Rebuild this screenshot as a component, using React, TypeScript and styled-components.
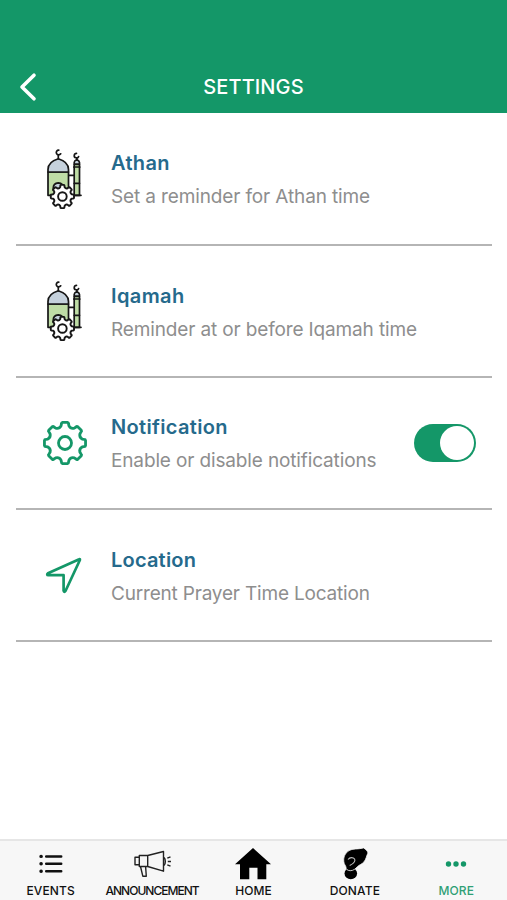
import React from 'react';
import styled, { createGlobalStyle } from 'styled-components';

const GREEN = '#149768';

const GlobalStyle = createGlobalStyle`
  * { box-sizing: border-box; }
  body { margin: 0; background: #fff; font-family: Inter, "Liberation Sans", sans-serif; }
`;

const Screen = styled.div`
  display: flex;
  flex-direction: column;
  width: 507px;
  height: 900px;
  overflow: hidden;
  background: #fff;
`;

const Header = styled.header`
  display: grid;
  grid-template-columns: 60px 1fr 60px;
  align-items: center;
  flex: none;
  height: 113px;
  padding-top: 60px;
  background: ${GREEN};
  color: #fff;
`;

const BackButton = styled.button`
  display: flex;
  width: 60px;
  height: 53px;
  padding: 12px 0 0 18px;
  border: 0;
  background: none;
  color: inherit;
`;

const HeaderTitle = styled.h1`
  margin: 0;
  text-align: center;
  font-size: 20px;
  font-weight: 500;
  line-height: 24px;
  letter-spacing: 0.1px;
`;

const List = styled.main`
  flex: 1;
  padding: 1px 15px 0 16px;
`;

const Row = styled.section`
  display: grid;
  grid-template-columns: 95px 1fr 62px;
  height: 132px;
  padding-right: 16px;
  border-bottom: 2px solid #b5b5b5;
`;

const IconCell = styled.div`
  display: flex;
  justify-content: center;
  align-items: center;
  height: 130px;
  padding-left: 2px;
`;

const MosqueCell = styled(IconCell)`
  height: 132px;
  padding-left: 3px;
`;

const Copy = styled.div<{ $top: number }>`
  padding-top: ${p => p.$top}px;
  white-space: nowrap;
`;

const Title = styled.h2<{ $track: number }>`
  margin: 0;
  color: #256a8c;
  font-size: 20px;
  font-weight: 600;
  line-height: 24px;
  letter-spacing: ${p => p.$track}px;
`;

const Subtitle = styled.p<{ $track: number }>`
  margin: 9px 0 0;
  color: #8e8e8e;
  font-size: 19px;
  line-height: 25px;
  letter-spacing: ${p => p.$track}px;
`;

const Switch = styled.button`
  display: flex;
  justify-content: flex-end;
  align-items: center;
  align-self: center;
  width: 62px;
  height: 38px;
  padding: 0 2px;
  border: 0;
  border-radius: 19px;
  background: ${GREEN};
`;

const Knob = styled.span`
  width: 34px;
  height: 34px;
  border-radius: 50%;
  background: #fff;
`;

const TabBar = styled.nav`
  display: grid;
  grid-template-columns: repeat(5, 1fr);
  flex: none;
  height: 61px;
  border-top: 2px solid #e6e6e6;
  background: #f7f7f7;
`;

const Tab = styled.a<{ $active?: boolean }>`
  display: flex;
  flex-direction: column;
  align-items: center;
  min-width: 0;
  color: ${p => (p.$active ? '#2f9f75' : '#111')};
`;

const TabIcon = styled.span`
  display: flex;
  align-items: center;
  justify-content: center;
  height: 43px;
  padding-top: 2px;
`;

const TabLabel = styled.span<{ $track: number }>`
  font-size: 12px;
  font-weight: 500;
  line-height: 14px;
  white-space: nowrap;
  letter-spacing: ${p => p.$track}px;
`;

function gearPath(cx: number, cy: number, tip: number, root: number, teeth = 8) {
  const point = (r: number, deg: number) => {
    const a = (deg * Math.PI) / 180;
    return `${(cx + r * Math.sin(a)).toFixed(2)} ${(cy - r * Math.cos(a)).toFixed(2)}`;
  };
  const step = 360 / teeth;
  let d = '';
  for (let i = 0; i < teeth; i++) {
    const c = i * step;
    d += `${i ? 'L' : 'M'}${point(tip * 0.94, c - 10.5)}`;
    d += `Q${point(tip, c - 10)} ${point(tip, c - 7)}L${point(tip, c + 7)}`;
    d += `Q${point(tip, c + 10)} ${point(tip * 0.94, c + 10.5)}`;
    d += `L${point(root * 1.1, c + 13)}`;
    d += `Q${point(root * 0.94, c + step / 2)} ${point(root * 1.1, c + step - 13)}`;
  }
  return d + 'Z';
}

const MosqueIcon = () => (
  <svg width="40" height="64" viewBox="0 0 40 64" fill="none" stroke="#161616" strokeWidth="1.7" strokeLinejoin="round" strokeLinecap="round">
    <path d="M3 24h20.5v23.3H3z" fill="#bfdda6" />
    <path d="M3 24v-2.5C3 16 7.5 12.5 13.3 10.8 19 12.5 23.5 16 23.5 21.5V24z" fill="#c5d1dc" />
    <path d="M13.3 10.8V7" />
    <path d="M13.8 2.1a2.4 2.4 0 1 0 1.9 3.7" />
    <path d="M8.3 42v-2.3c0-3 2.2-4.6 5-4.9 2.8.3 5 2 5 4.9V42z" fill="#c5d1dc" />
    <path d="M23.8 27.3h4.7" />
    <path d="M29.2 16.5h5.3v30.8h-5.3z" fill="#bfdda6" />
    <path d="M29.2 16v-1.5c0-1.3 1.2-2.4 2.6-3.1 1.4.7 2.7 1.8 2.7 3.1V16z" fill="#c5d1dc" />
    <path d="M28.8 19h6M29.2 35.3h5.3M26 47.3h10M31.8 11V9.8" />
    <path d="M31.5 5.3a2.3 2.3 0 1 0 2.1 3.3" />
    <path d={gearPath(17.4, 48.5, 11.7, 8.8)} fill="#fff" strokeWidth="1.9" />
    <circle cx="17.4" cy="48.5" r="4.3" fill="#fff" strokeWidth="1.9" />
  </svg>
);

const GearIcon = () => (
  <svg width="46" height="46" viewBox="0 0 46 46" fill="none" stroke={GREEN} strokeWidth="2.8" strokeLinejoin="round">
    <path d={gearPath(23, 23, 20.7, 16)} />
    <circle cx="23" cy="23" r="6.5" />
  </svg>
);

const ArrowIcon = () => (
  <svg width="40" height="40" viewBox="0 0 40 40" fill="none" stroke={GREEN} strokeWidth="2.7" strokeLinejoin="round">
    <path d="M34.2 4.2 3 18.3Q1.2 20 3.4 20.2H18.6V35.8Q19.1 38 20.6 35.7L34.8 5.3Q35.3 3.6 34.2 4.2Z" />
  </svg>
);

const ListIcon = () => (
  <svg width="24" height="22" viewBox="0 0 24 22" stroke="#111" strokeWidth="2.5" strokeLinecap="round">
    <path d="M7.2 3.4h15M7.2 10.8h15M7.2 18.2h15" />
    <path d="M2 3.4h.2M2 10.8h.2M2 18.2h.2" strokeWidth="3.4" />
  </svg>
);

const MegaphoneIcon = () => (
  <svg width="40" height="30" viewBox="0 0 40 30" fill="none" stroke="#222" strokeWidth="1.4" strokeLinejoin="round">
    <path d="M7.3 6.5h8.4v11H7.3zM7.3 8.3H3v7.4h4.3M15.7 6.5 31.5 2.5v19.7l-15.8-4.7M32 8.5c1.8 1.5 1.8 6.5 0 8M8.5 17.5l2.3 9.7h3.5l-.7-9.7" />
    <path d="M35.3 9.2l3.2-1.4M35.8 12.5H39M35.3 15.8l3.2 1.4" />
  </svg>
);

const HomeIcon = () => (
  <svg width="38" height="34" viewBox="0 0 38 34">
    <path d="M19 1 1 17.3H6V32.3h9.3V20.8h8.2v11.5h8.8v-15H37Z" fill="#000" />
  </svg>
);

const DonateIcon = () => (
  <svg width="28" height="34" viewBox="0 0 28 34">
    <ellipse cx="9.8" cy="26.5" rx="6.3" ry="5.8" fill="#000" />
    <path d="M2.8 14.5C2.3 10.2 4 6.3 8 3.6 11.5 1.3 17 2.5 22.6.9 25 2.5 26.4 3.8 27 6c-1.5 2.5-1.7 6.3-4.3 9.2-1.9 2-4.5 2.7-6.2 4.4-1.4 1.6-4 4.2-7.3 4.1-2.8-.1-4.5-1.7-4.2-3.4C5 19 2.9 17.3 2.8 14.5Z" fill="#000" stroke="#f7f7f7" strokeWidth=".8" />
    <path d="M7 12.5c1.2-1.5 3.4-2.3 5.3-1.5 1.1.5 1.7 1.3 1.6 2.3-.2 2-2.5 3.9-5.2 5.3" fill="none" stroke="#bdbdbd" strokeWidth="1.1" />
  </svg>
);

const MoreIcon = () => (
  <svg width="22" height="8" viewBox="0 0 22 8" fill={GREEN}>
    <circle cx="3.5" cy="4" r="2.7" /><circle cx="11" cy="4" r="2.7" /><circle cx="18.5" cy="4" r="2.7" />
  </svg>
);

const settings = [
  { title: 'Athan', sub: 'Set a reminder for Athan time', icon: <MosqueIcon />, mosque: true, top: 37, tt: 0.35, st: -0.13 },
  { title: 'Iqamah', sub: 'Reminder at or before Iqamah time', icon: <MosqueIcon />, mosque: true, top: 38, tt: 0.4, st: -0.14 },
  { title: 'Notification', sub: 'Enable or disable notifications', icon: <GearIcon />, top: 37, tt: 0.34, st: -0.14, toggle: true },
  { title: 'Location', sub: 'Current Prayer Time Location', icon: <ArrowIcon />, top: 38, tt: 0.2, st: -0.19 },
];

const tabs = [
  { label: 'EVENTS', icon: <ListIcon />, track: 0.15 },
  { label: 'ANNOUNCEMENT', icon: <MegaphoneIcon />, track: -0.97 },
  { label: 'HOME', icon: <HomeIcon />, track: 0.1 },
  { label: 'DONATE', icon: <DonateIcon />, track: 0.15 },
  { label: 'MORE', icon: <MoreIcon />, track: 0.1, active: true },
];

export default function App() {
  return (
    <Screen>
      <GlobalStyle />
      <Header>
        <BackButton aria-label="Back">
          <svg width="20" height="30" viewBox="0 0 20 30" fill="none" stroke="#fff" strokeWidth="3.6" strokeLinecap="round" strokeLinejoin="round">
            <path d="M16 3.2 4 15l12 11.8" />
          </svg>
        </BackButton>
        <HeaderTitle>SETTINGS</HeaderTitle>
      </Header>
      <List>
        {settings.map(s => {
          const Cell = s.mosque ? MosqueCell : IconCell;
          return (
            <Row key={s.title}>
              <Cell>{s.icon}</Cell>
              <Copy $top={s.top}>
                <Title $track={s.tt}>{s.title}</Title>
                <Subtitle $track={s.st}>{s.sub}</Subtitle>
              </Copy>
              {s.toggle && <Switch role="switch" aria-checked="true" aria-label={s.title}><Knob /></Switch>}
            </Row>
          );
        })}
      </List>
      <TabBar>
        {tabs.map(t => (
          <Tab key={t.label} $active={t.active}>
            <TabIcon>{t.icon}</TabIcon>
            <TabLabel $track={t.track}>{t.label}</TabLabel>
          </Tab>
        ))}
      </TabBar>
    </Screen>
  );
}
